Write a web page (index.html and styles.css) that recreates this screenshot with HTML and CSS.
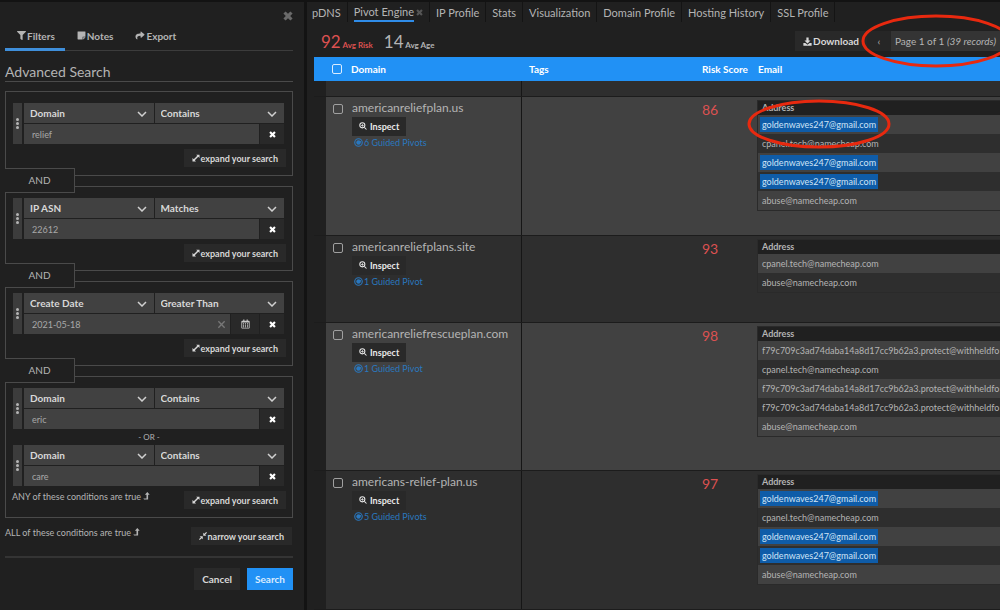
FILE: index.html
```html
<!DOCTYPE html>
<html lang="en">
<head>
    <meta charset="UTF-8">
    <meta name="viewport" content="width=device-width, initial-scale=1.0">
    <title>Pivot Engine</title>
    <link rel="stylesheet" href="styles.css">
</head>
<body>
    <svg class="sprite" aria-hidden="true">
        <symbol id="i-filter" viewBox="0 0 512 512"><path d="M488 0H24C3 0-8 26 7 41l185 185v206c0 8 4 15 10 20l80 56c16 11 38 0 38-20V226L505 41c15-15 4-41-17-41z"/></symbol>
        <symbol id="i-note" viewBox="0 0 448 512"><path d="M312 320h136V56c0-13-11-24-24-24H24C11 32 0 43 0 56v400c0 13 11 24 24 24h264V344c0-13 11-24 24-24zm129 55l-98 98c-5 5-11 7-17 7h-6V352h128v6c0 6-3 12-7 17z"/></symbol>
        <symbol id="i-share" viewBox="0 0 512 512"><path d="M504 190L328 38c-16-13-40-3-40 18v80C127 138 0 170 0 322c0 62 40 122 83 154 14 10 33-2 28-18-45-145 22-184 177-186v88c0 21 24 31 40 18l176-152c11-10 11-26 0-36z"/></symbol>
        <symbol id="i-times" viewBox="0 0 10 10"><path d="M2.6.4 5 2.8 7.4.4l2.2 2.2L7.2 5l2.4 2.4-2.2 2.2L5 7.2 2.6 9.6.4 7.4 2.8 5 .4 2.6z"/></symbol>
        <symbol id="i-thin-times" viewBox="0 0 10 10"><path d="M1.5 1.5l7 7M8.5 1.5l-7 7" fill="none" stroke="currentColor" stroke-width="1.5"/></symbol>
        <symbol id="i-chevron" viewBox="0 0 10 6"><path d="M1 1l4 4 4-4" fill="none" stroke="currentColor" stroke-width="1.5"/></symbol>
        <symbol id="i-expand" viewBox="0 0 10 10"><path d="M5.2.8H9.4V5L7.9 3.5 3.5 7.9 5 9.4H.6V5l1.6 1.6 4.4-4.4z"/></symbol>
        <symbol id="i-compress" viewBox="0 0 10 10"><path d="M9 0l1 1-2.300 2.300L9.200 4.700H5.300V.8l1.400 1.500zM.8 5.300h3.900v3.900L3.300 7.700 1 10 0 9l2.300-2.300z"/></symbol>
        <symbol id="i-levelup" viewBox="0 0 8 10"><path d="M5 0l3 3.500H6V9.500H1L0 8h4V3.500H2z"/></symbol>
        <symbol id="i-calendar" viewBox="0 0 12 12"><path fill-rule="evenodd" d="M3 0h1.500v1.500h3V0H9v1.500h1.500q1 0 1 1V11q0 1-1 1h-9q-1 0-1-1V2.500q0-1 1-1H3zM1.500 4v7h9V4zM2.500 5h1.500v1.300H2.500zM5.200 5h1.500v1.300H5.200zM8 5h1.500v1.300H8zM2.500 7h1.500v1.300H2.500zM5.200 7h1.500v1.300H5.200zM8 7h1.500v1.300H8zM2.500 9h1.500v1.200H2.500zM5.200 9h1.500v1.200H5.200zM8 9h1.500v1.200H8z"/></symbol>
        <symbol id="i-download" viewBox="0 0 12 12"><path d="M4.500.5h3v4H10l-4 4-4-4h2.500zM.5 8h2.600L6 10.200 8.900 8h2.600v3.500H.5z"/></symbol>
        <symbol id="i-zoom" viewBox="0 0 12 12"><circle cx="5" cy="5" r="3.800" fill="none" stroke="currentColor" stroke-width="1.600"/><path d="M7.500 8.600l1.100-1.100L11.800 10.700l-1.100 1.100zM4.500 3h1v1.500H7v1H5.500V7h-1V5.500H3v-1h1.500z"/></symbol>
        <symbol id="i-pivot" viewBox="0 0 12 12"><circle cx="6" cy="6" r="5" fill="none" stroke="currentColor" stroke-width="1.500"/><circle cx="6" cy="6" r="3"/><path d="M8 3.500l1.500 1-3 3-1-1z"/></symbol>
    </svg>

    <div class="app">
        <aside class="sidebar">
            <button class="close" aria-label="Close panel"><svg class="icon"><use href="#i-times"/></svg></button>
            <nav class="side-tabs">
                <a href="#" class="active"><svg class="icon"><use href="#i-filter"/></svg>Filters</a>
                <a href="#"><svg class="icon"><use href="#i-note"/></svg>Notes</a>
                <a href="#"><svg class="icon wide"><use href="#i-share"/></svg>Export</a>
            </nav>
            <h1>Advanced Search</h1>

            <div class="groups">
                <section class="group">
                    <div class="condition">
                        <span class="handle"><i></i><i></i><i></i></span>
                        <div class="fields">
                            <div class="field-row">
                                <label class="pick"><select aria-label="Field"><option>Domain</option></select><svg><use href="#i-chevron"/></svg></label>
                                <label class="pick"><select aria-label="Operator"><option>Contains</option></select><svg><use href="#i-chevron"/></svg></label>
                            </div>
                            <div class="field-row">
                                <input type="text" value="relief" aria-label="Value">
                                <button class="square" aria-label="Remove"><svg class="icon"><use href="#i-times"/></svg></button>
                            </div>
                        </div>
                    </div>
                    <div class="group-foot">
                        <button class="btn"><svg class="icon"><use href="#i-expand"/></svg>expand your search</button>
                    </div>
                </section>

                <section class="group">
                    <span class="joiner">AND</span>
                    <div class="condition">
                        <span class="handle"><i></i><i></i><i></i></span>
                        <div class="fields">
                            <div class="field-row">
                                <label class="pick"><select aria-label="Field"><option>IP ASN</option></select><svg><use href="#i-chevron"/></svg></label>
                                <label class="pick"><select aria-label="Operator"><option>Matches</option></select><svg><use href="#i-chevron"/></svg></label>
                            </div>
                            <div class="field-row">
                                <input type="text" value="22612" aria-label="Value">
                                <button class="square" aria-label="Remove"><svg class="icon"><use href="#i-times"/></svg></button>
                            </div>
                        </div>
                    </div>
                    <div class="group-foot">
                        <button class="btn"><svg class="icon"><use href="#i-expand"/></svg>expand your search</button>
                    </div>
                </section>

                <section class="group">
                    <span class="joiner">AND</span>
                    <div class="condition">
                        <span class="handle"><i></i><i></i><i></i></span>
                        <div class="fields">
                            <div class="field-row">
                                <label class="pick"><select aria-label="Field"><option>Create Date</option></select><svg><use href="#i-chevron"/></svg></label>
                                <label class="pick"><select aria-label="Operator"><option>Greater Than</option></select><svg><use href="#i-chevron"/></svg></label>
                            </div>
                            <div class="field-row">
                                <div class="date">
                                    <input type="text" value="2021-05-18" aria-label="Value">
                                    <button class="clear" aria-label="Clear date"><svg class="icon"><use href="#i-thin-times"/></svg></button>
                                </div>
                                <button class="square calendar" aria-label="Pick a date"><svg class="icon"><use href="#i-calendar"/></svg></button>
                                <button class="square" aria-label="Remove"><svg class="icon"><use href="#i-times"/></svg></button>
                            </div>
                        </div>
                    </div>
                    <div class="group-foot">
                        <button class="btn"><svg class="icon"><use href="#i-expand"/></svg>expand your search</button>
                    </div>
                </section>

                <section class="group">
                    <span class="joiner">AND</span>
                    <div class="condition">
                        <span class="handle"><i></i><i></i><i></i></span>
                        <div class="fields">
                            <div class="field-row">
                                <label class="pick"><select aria-label="Field"><option>Domain</option></select><svg><use href="#i-chevron"/></svg></label>
                                <label class="pick"><select aria-label="Operator"><option>Contains</option></select><svg><use href="#i-chevron"/></svg></label>
                            </div>
                            <div class="field-row">
                                <input type="text" value="eric" aria-label="Value">
                                <button class="square" aria-label="Remove"><svg class="icon"><use href="#i-times"/></svg></button>
                            </div>
                        </div>
                    </div>
                    <div class="or">- OR -</div>
                    <div class="condition">
                        <span class="handle"><i></i><i></i><i></i></span>
                        <div class="fields">
                            <div class="field-row">
                                <label class="pick"><select aria-label="Field"><option>Domain</option></select><svg><use href="#i-chevron"/></svg></label>
                                <label class="pick"><select aria-label="Operator"><option>Contains</option></select><svg><use href="#i-chevron"/></svg></label>
                            </div>
                            <div class="field-row">
                                <input type="text" value="care" aria-label="Value">
                                <button class="square" aria-label="Remove"><svg class="icon"><use href="#i-times"/></svg></button>
                            </div>
                        </div>
                    </div>
                    <div class="group-foot">
                        <span class="hint">ANY of these conditions are true <svg class="icon"><use href="#i-levelup"/></svg></span>
                        <button class="btn"><svg class="icon"><use href="#i-expand"/></svg>expand your search</button>
                    </div>
                </section>
            </div>

            <div class="narrow">
                <span class="hint">ALL of these conditions are true <svg class="icon"><use href="#i-levelup"/></svg></span>
                <button class="btn"><svg class="icon"><use href="#i-compress"/></svg>narrow your search</button>
            </div>
            <div class="actions">
                <button class="action">Cancel</button>
                <button class="action primary">Search</button>
            </div>
        </aside>

        <main class="main">
            <nav class="tabs">
                <a href="#">pDNS</a>
                <a href="#" class="active"><span>Pivot Engine</span><svg class="icon"><use href="#i-times"/></svg></a>
                <a href="#">IP Profile</a>
                <a href="#">Stats</a>
                <a href="#">Visualization</a>
                <a href="#">Domain Profile</a>
                <a href="#">Hosting History</a>
                <a href="#">SSL Profile</a>
            </nav>

            <div class="toolbar">
                <div class="stat risk"><b>92</b> Avg Risk</div>
                <div class="stat"><b>14</b> Avg Age</div>
                <button class="download"><svg class="icon"><use href="#i-download"/></svg>Download</button>
                <div class="pager">
                    <button class="prev" aria-label="Previous page">‹</button>
                    <span class="page">Page 1 of 1 <em>(39 records)</em></span>
                    <svg class="mark" viewBox="0 0 150 56"><ellipse cx="75" cy="28" rx="73" ry="25"/></svg>
                </div>
            </div>

            <table class="results">
                <colgroup>
                    <col class="c-gutter"><col class="c-check"><col class="c-domain"><col class="c-tags"><col class="c-risk"><col>
                </colgroup>
                <thead>
                    <tr>
                        <th></th>
                        <th><input type="checkbox" aria-label="Select all"></th>
                        <th>Domain</th>
                        <th>Tags</th>
                        <th>Risk Score</th>
                        <th>Email</th>
                    </tr>
                </thead>
                <tbody>
                    <tr class="sliver even"><td></td><td></td><td></td><td></td><td></td><td></td></tr>
                    <tr class="h-139">
                        <td></td>
                        <td><input type="checkbox" aria-label="Select americanreliefplan.us"></td>
                        <td>
                            <div class="domain">americanreliefplan.us</div>
                            <button class="inspect"><svg class="icon"><use href="#i-zoom"/></svg>Inspect</button>
                            <a href="#" class="pivots"><svg class="icon"><use href="#i-pivot"/></svg>6 Guided Pivots</a>
                        </td>
                        <td></td>
                        <td class="score">86</td>
                        <td>
                            <table class="emails">
                                <thead><tr><th>Address</th></tr></thead>
                                <tbody>
                                    <tr><td><mark>goldenwaves247@gmail.com</mark><svg class="mark" viewBox="0 0 144 50"><ellipse cx="72" cy="25" rx="70" ry="23"/></svg></td></tr>
                                    <tr><td>cpanel.tech@namecheap.com</td></tr>
                                    <tr><td><mark>goldenwaves247@gmail.com</mark></td></tr>
                                    <tr><td><mark>goldenwaves247@gmail.com</mark></td></tr>
                                    <tr><td>abuse@namecheap.com</td></tr>
                                </tbody>
                            </table>
                        </td>
                    </tr>
                    <tr class="even h-87">
                        <td></td>
                        <td><input type="checkbox" aria-label="Select americanreliefplans.site"></td>
                        <td>
                            <div class="domain">americanreliefplans.site</div>
                            <button class="inspect"><svg class="icon"><use href="#i-zoom"/></svg>Inspect</button>
                            <a href="#" class="pivots"><svg class="icon"><use href="#i-pivot"/></svg>1 Guided Pivot</a>
                        </td>
                        <td></td>
                        <td class="score">93</td>
                        <td>
                            <table class="emails">
                                <thead><tr><th>Address</th></tr></thead>
                                <tbody>
                                    <tr><td>cpanel.tech@namecheap.com</td></tr>
                                    <tr><td>abuse@namecheap.com</td></tr>
                                </tbody>
                            </table>
                        </td>
                    </tr>
                    <tr class="h-148">
                        <td></td>
                        <td><input type="checkbox" aria-label="Select americanreliefrescueplan.com"></td>
                        <td>
                            <div class="domain">americanreliefrescueplan.com</div>
                            <button class="inspect"><svg class="icon"><use href="#i-zoom"/></svg>Inspect</button>
                            <a href="#" class="pivots"><svg class="icon"><use href="#i-pivot"/></svg>1 Guided Pivot</a>
                        </td>
                        <td></td>
                        <td class="score">98</td>
                        <td>
                            <table class="emails">
                                <thead><tr><th>Address</th></tr></thead>
                                <tbody>
                                    <tr><td>f79c709c3ad74daba14a8d17cc9b62a3.protect@withheldfo</td></tr>
                                    <tr><td>cpanel.tech@namecheap.com</td></tr>
                                    <tr><td>f79c709c3ad74daba14a8d17cc9b62a3.protect@withheldfo</td></tr>
                                    <tr><td>f79c709c3ad74daba14a8d17cc9b62a3.protect@withheldfo</td></tr>
                                    <tr><td>abuse@namecheap.com</td></tr>
                                </tbody>
                            </table>
                        </td>
                    </tr>
                    <tr class="even h-139">
                        <td></td>
                        <td><input type="checkbox" aria-label="Select americans-relief-plan.us"></td>
                        <td>
                            <div class="domain">americans-relief-plan.us</div>
                            <button class="inspect"><svg class="icon"><use href="#i-zoom"/></svg>Inspect</button>
                            <a href="#" class="pivots"><svg class="icon"><use href="#i-pivot"/></svg>5 Guided Pivots</a>
                        </td>
                        <td></td>
                        <td class="score">97</td>
                        <td>
                            <table class="emails">
                                <thead><tr><th>Address</th></tr></thead>
                                <tbody>
                                    <tr><td><mark>goldenwaves247@gmail.com</mark></td></tr>
                                    <tr><td>cpanel.tech@namecheap.com</td></tr>
                                    <tr><td><mark>goldenwaves247@gmail.com</mark></td></tr>
                                    <tr><td><mark>goldenwaves247@gmail.com</mark></td></tr>
                                    <tr><td>abuse@namecheap.com</td></tr>
                                </tbody>
                            </table>
                        </td>
                    </tr>
                </tbody>
            </table>
        </main>
    </div>
</body>
</html>
```
FILE: styles.css
```css
* {
    box-sizing: border-box;
}
body {
    margin: 0;
    background-color: #202020;
    color: #b4b4b4;
    font-family: Lato, sans-serif;
    font-size: 10px;
}
a {
    color: inherit;
    text-decoration: none;
}
button, input, select {
    font: inherit;
    color: inherit;
    border: none;
    border-radius: 0;
    padding: 0;
    margin: 0;
}
button {
    cursor: pointer;
    background: none;
}
.sprite {
    display: none;
}
.icon {
    width: 9px;
    height: 9px;
    fill: currentColor;
    flex: none;
}
.app {
    display: flex;
    min-height: 100vh;
    border-top: 2px solid #131313;
}

/* Sidebar */
.sidebar {
    flex: none;
    width: 307px;
    padding: 9px 11px 0 5px;
    border-right: 3px solid #131313;
    display: flex;
    flex-direction: column;
}
.close {
    align-self: flex-end;
    height: 10px;
    line-height: 10px;
    color: #6a6a6a;
}
.close .icon {
    width: 10px;
    height: 10px;
    display: block;
}
.side-tabs {
    display: flex;
    margin-top: 4px;
    border-bottom: 1px solid #3c3c3c;
}
.side-tabs a {
    display: flex;
    align-items: center;
    gap: 1px;
    height: 26px;
    padding: 0 10px 2px 12px;
    margin-bottom: -1px;
    font-size: 10px;
    font-weight: bold;
    border-bottom: 3px solid transparent;
}
.side-tabs .active {
    border-bottom-color: #3f8fdb;
}
.side-tabs .wide {
    width: 10px;
}
h1 {
    margin: 11px 0 0;
    height: 20px;
    line-height: 20px;
    font-size: 14px;
    font-weight: normal;
    border-bottom: 1px solid #4a4a4a;
}
.groups {
    display: flex;
    flex-direction: column;
    gap: 10px;
    margin-top: 9px;
}
.group {
    position: relative;
    padding: 11px 7px 8px;
    border: 1px solid #4a4a4a;
}
.joiner {
    position: absolute;
    top: -19px;
    left: -1px;
    width: 70px;
    height: 25px;
    line-height: 23px;
    text-align: center;
    font-size: 10px;
    background-color: #202020;
    border: 1px solid #4a4a4a;
    border-left: none;
}
.condition {
    display: flex;
    gap: 2px;
    margin-right: 1px;
}
.handle {
    width: 9px;
    display: flex;
    flex-direction: column;
    align-items: center;
    justify-content: center;
    gap: 1px;
    background-color: #3c3c3c;
}
.handle i {
    width: 3px;
    height: 3px;
    border-radius: 50%;
    background-color: #b4b4b4;
}
.fields {
    flex: 1;
    display: flex;
    flex-direction: column;
    gap: 1px;
}
.field-row {
    display: flex;
    gap: 1px;
    height: 20px;
}
.pick {
    position: relative;
    flex: 1;
    display: flex;
}
.pick select {
    appearance: none;
    width: 100%;
    padding: 0 6px;
    color: #d8d8d8;
    font-size: 10px;
    font-weight: bold;
    background-color: #414141;
}
.pick svg {
    position: absolute;
    right: 7px;
    top: 8px;
    width: 10px;
    height: 6px;
    color: #d0d0d0;
    pointer-events: none;
}
input[type="text"] {
    flex: 1;
    min-width: 0;
    padding: 0 8px;
    color: #a8a8a8;
    font-size: 9px;
    background-color: #414141;
}
.square {
    width: 24px;
    display: flex;
    align-items: center;
    justify-content: center;
    color: #fff;
    background-color: #292929;
}
.square .icon {
    width: 7px;
    height: 7px;
}
.calendar {
    width: 28px;
    color: #c8c8c8;
}
.calendar .icon {
    width: 9px;
    height: 10px;
}
.date {
    position: relative;
    flex: 1;
    display: flex;
}
.clear {
    position: absolute;
    right: 4px;
    top: 6px;
    height: 9px;
    line-height: 9px;
    color: #777;
}
.clear .icon {
    display: block;
}
.or {
    height: 16px;
    line-height: 16px;
    text-align: center;
    font-size: 8px;
}
.group-foot, .narrow {
    display: flex;
    justify-content: space-between;
}
.group-foot {
    margin: 5px -1px 0 -1px;
}
.btn {
    display: flex;
    align-items: center;
    gap: 1px;
    height: 18px;
    padding: 0 8px;
    margin-left: auto;
    font-size: 9px;
    font-weight: bold;
    color: #d8d8d8;
    background-color: #292929;
}
.btn .icon {
    width: 8px;
    height: 8px;
}
.hint {
    line-height: 12px;
    font-size: 9px;
}
.hint .icon {
    width: 7px;
    height: 8px;
}
.narrow {
    padding: 9px 1px 11px 0;
    border-bottom: 2px solid #343434;
}
.actions {
    display: flex;
    justify-content: flex-end;
    gap: 7px;
    padding: 10px 0;
}
.action {
    height: 22px;
    padding: 0 8px;
    font-size: 10px;
    font-weight: bold;
    color: #d8d8d8;
    background-color: #292929;
}
.action.primary {
    color: #d9ecff;
    background-color: #2191f5;
}

/* Main area */
.main {
    flex: 1;
    min-width: 0;
    overflow: hidden;
}
.tabs {
    display: flex;
    height: 20px;
    font-size: 11px;
    white-space: nowrap;
}
.tabs a {
    display: flex;
    align-items: center;
    gap: 2px;
    padding: 0 6px;
    border-right: 1px solid #141414;
}
.tabs a:first-child {
    padding-left: 5px;
}
.tabs .active span {
    line-height: 17px;
    border-bottom: 2px solid #2f8ce8;
}
.tabs .icon {
    width: 7px;
    height: 7px;
    color: #555;
}
.toolbar {
    display: flex;
    align-items: center;
    height: 35px;
    padding: 3px 0 0 14px;
    white-space: nowrap;
}
.stat {
    margin-right: 11px;
    font-size: 8px;
    font-weight: bold;
}
.stat b {
    font-size: 17px;
    font-weight: normal;
}
.risk, .score {
    color: #dc5151;
}
.download {
    display: flex;
    align-items: center;
    gap: 1px;
    height: 20px;
    margin-left: auto;
    padding: 0 8px;
    font-size: 10px;
    font-weight: bold;
    color: #d8d8d8;
    background-color: #292929;
}
.pager {
    position: relative;
    display: flex;
    height: 20px;
    line-height: 20px;
}
.prev {
    width: 24px;
    background-color: #262626;
}
.page {
    padding: 0 4px;
    background-color: #343434;
}
.mark {
    position: absolute;
    fill: none;
    stroke: #e8290f;
    stroke-width: 3px;
    pointer-events: none;
    z-index: 2;
}
.pager .mark {
    left: -6px;
    top: -18px;
    width: 150px;
    height: 56px;
}

/* Results */
.results {
    width: calc(100% - 7px);
    margin-left: 7px;
    table-layout: fixed;
    border-collapse: collapse;
}
.results th {
    padding: 0;
    text-align: left;
}
.results > thead tr {
    height: 24px;
    color: #fff;
    background-color: #2191f5;
}
.c-gutter {
    width: 12px;
}
.c-check {
    width: 25px;
}
.c-domain {
    width: 170px;
}
.c-tags {
    width: 174px;
}
.c-risk {
    width: 61px;
}
.results > thead th:nth-child(4) {
    padding-left: 8px;
}
.results > thead th:nth-child(5), .score {
    padding-left: 7px;
}
.results > thead th:nth-child(6) {
    padding-left: 2px;
}
.results > tbody > tr > td {
    padding-top: 3px;
    padding-bottom: 0;
    padding-right: 0;
    vertical-align: top;
    border-bottom: 1px solid #1c1c1c;
    background-color: #414141;
}
.results > tbody > tr.even > td {
    background-color: #2e2e2e;
}
.results > tbody > tr > td:first-child {
    background-color: #202020;
}
.results > tbody > tr > td:nth-child(3) {
    border-right: 1px solid #161616;
}
.sliver {
    height: 15px;
}
.h-87 {
    height: 87px;
}
.h-139 {
    height: 139px;
}
.h-148 {
    height: 148px;
}
input[type="checkbox"] {
    appearance: none;
    display: block;
    width: 10px;
    height: 10px;
    margin: 0 6px;
    border: 1px solid #a0a0a0;
    border-radius: 2px;
}
thead input[type="checkbox"] {
    border-color: #d9ecff;
}
tbody input[type="checkbox"] {
    margin-top: 4px;
}
.domain {
    line-height: 16px;
    font-size: 12px;
}
.inspect {
    display: flex;
    align-items: center;
    gap: 3px;
    height: 19px;
    margin-top: 1px;
    padding: 0 7px;
    font-size: 9px;
    font-weight: bold;
    color: #e8e8e8;
    background-color: #292929;
}
.inspect .icon {
    width: 8px;
    height: 8px;
}
.pivots {
    display: flex;
    align-items: center;
    gap: 1px;
    height: 14px;
    padding-left: 2px;
    font-size: 9px;
    color: #2a78bf;
}
.results .score {
    padding-top: 4px;
    line-height: 18px;
    font-size: 14px;
}
.emails {
    width: 100%;
    border-collapse: collapse;
    white-space: nowrap;
    border: 1px solid #2a2a2a;
    border-right: none;
}
.emails th {
    height: 15px;
    padding: 0 4px;
    font-size: 9px;
    background-color: #202020;
}
.emails td {
    position: relative;
    height: 19px;
    padding: 0 0 0 4px;
    font-size: 9px;
    background-color: #2e2e2e;
}
.emails tbody tr:nth-child(odd) td {
    background-color: #414141;
}
.emails mark {
    padding: 2px;
    margin-left: -2px;
    color: #cfe4f7;
    background-color: #0f5ca8;
}
.emails .mark {
    left: -11px;
    top: -16px;
    width: 144px;
    height: 50px;
}
```
